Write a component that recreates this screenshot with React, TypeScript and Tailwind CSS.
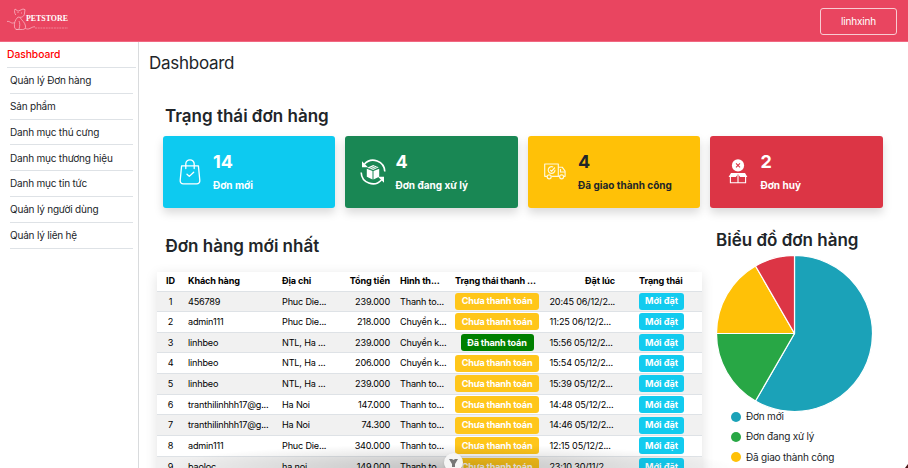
import type { ReactNode } from "react";

const nav = [
  "Quản lý Đơn hàng",
  "Sản phẩm",
  "Danh mục thú cưng",
  "Danh mục thương hiệu",
  "Danh mục tin tức",
  "Quản lý người dùng",
  "Quản lý liên hệ",
];

const orders = [
  ["1", "456789", "Phuc Die...", "239.000", "Thanh to...", false, "20:45 06/12/2..."],
  ["2", "admin111", "Phuc Die...", "218.000", "Chuyển k...", false, "11:25 06/12/2..."],
  ["3", "linhbeo", "NTL, Ha ...", "239.000", "Chuyển k...", true, "15:56 05/12/2..."],
  ["4", "linhbeo", "NTL, Ha ...", "206.000", "Chuyển k...", false, "15:54 05/12/2..."],
  ["5", "linhbeo", "NTL, Ha ...", "239.000", "Thanh to...", false, "15:39 05/12/2..."],
  ["6", "tranthilinhhh17@g...", "Ha Noi", "147.000", "Thanh to...", false, "14:48 05/12/2..."],
  ["7", "tranthilinhhh17@g...", "Ha Noi", "74.300", "Thanh to...", false, "14:46 05/12/2..."],
  ["8", "admin111", "Phuc Die...", "340.000", "Thanh to...", false, "12:15 05/12/2..."],
  ["9", "baoloc", "ha noi", "149.000", "Thanh to...", false, "23:10 30/11/2..."],
] as const;

const columns = "grid grid-cols-[26px_94px_57px_55px_61px_84px_76px_68px] items-center pl-[5px]";

function BagIcon() {
  return (
    <svg width="22" height="26" viewBox="0 0 22 26" fill="none" stroke="white" strokeWidth="1.3" strokeLinecap="round" strokeLinejoin="round">
      <path d="M2.6 6.8h16.8l1.4 14.5c.2 2.2-1 3.6-3.1 3.6H4.3c-2.1 0-3.3-1.4-3.1-3.6z" />
      <path d="M6.8 9.5V5a4.2 4.2 0 0 1 8.4 0v4.5M8 15.2l2.3 2.2 4.4-4.2" />
    </svg>
  );
}

function ProcessIcon() {
  return (
    <svg width="26" height="26" viewBox="0 0 26 26" fill="none" stroke="white" strokeWidth="1.6">
      <path d="M4.5 5A11.7 11.7 0 0 1 24.8 12.5M21.5 21A11.7 11.7 0 0 1 1.2 13.5" />
      <path d="M2 2.3v6h6zM24 23.7v-6h-6z" fill="white" stroke="none" />
      <path d="M6.8 9.7l5.700 2.300v8.400l-5.700-2.700zM13.500 12l5.700-2.300v8l-5.700 2.700z" fill="white" stroke="none" />
      <path d="M7.2 8.7l6-2.8 5.5 2.4-5.7 2.8z" fill="white" stroke="none" />
      <path d="M9.2 9.6l6-2.8M11.3 10.4l6-2.7" stroke="#198754" strokeWidth=".6" />
    </svg>
  );
}

function TruckIcon() {
  return (
    <svg width="22" height="17" viewBox="0 0 22 17" fill="none" stroke="#fff8dc" strokeWidth="1.15" strokeLinejoin="round">
      <path d="M3 13.3H.7V1h13.6v12.3H7.5M14.3 4.2h3.9l2.9 4v5.1h-1.2M14.3 13.3h1.4M16.5 6v3h4.2" />
      <circle cx="5.2" cy="13.8" r="2" />
      <circle cx="17.6" cy="13.8" r="2" />
      <path d="M11 6.8A3.4 3.4 0 1 1 9.2 4M6.2 6.8l1.4 1.5 3.3-3.8" />
    </svg>
  );
}

function CancelIcon() {
  return (
    <svg width="20" height="25" viewBox="0 0 20 25">
      <circle cx="10" cy="6.4" r="6.1" fill="white" />
      <path d="M8 4.4l4 4m0-4l-4 4" stroke="#dc3545" strokeWidth="1.1" />
      <path d="M3 14h14l2.4 4h-7.2L10 15.3 7.8 18H.6z" fill="white" />
      <path d="M2.4 17.5v6.3h15.2v-6.3M10 16v7.8" fill="none" stroke="white" strokeWidth="1.1" />
    </svg>
  );
}

function StatCard({ color, icon, count, label }: { color: string; icon: ReactNode; count: number; label: string }) {
  return (
    <div className={`flex h-[72px] items-center rounded-[3px] shadow-[0_5px_10px_rgba(0,0,0,0.15)] ${color}`}>
      <div className="ml-[13.5px] flex w-7 shrink-0 justify-center">{icon}</div>
      <div className="ml-[9px] font-bold">
        <div className="pt-px text-[18px] leading-[26px]">{count}</div>
        <div className="text-[10px] leading-[21px]">{label}</div>
      </div>
    </div>
  );
}

function Logo() {
  return (
    <svg className="mt-[-1px] shrink-0" width="64" height="26" viewBox="0 0 64 26" fill="none" stroke="#f9b4c1" strokeWidth=".8">
      <path d="M0 14.5c3-1 4 3 7.5 1M8 2l3 2.2L16 2l2 .6-.6 4.6c-.6 3-4 3.6-6.4 2.8M8 2c-.8 2-.6 4 .8 6M11 10c-3 3-4 6-3.5 10 .3 2.5 2 2.600 4 2.500M13 10.500c2 3 5 5 5.500 8.500.3 2.500-1 3.500-3 3.500H9M12 14c1 2 1 5 0 8M18 21c4 3 6-1.500 10-1.200M10.500 5.500h1M14 6h1" />
      <text x="19" y="14.2" fill="#fff" stroke="none" textLength="42" lengthAdjust="spacingAndGlyphs" fontSize="7.6" fontWeight="600" className="font-['Liberation_Serif',serif]">PETSTORE</text>
      <path d="M28 21h33" strokeDasharray="2 .7" strokeWidth="1" opacity=".55" />
    </svg>
  );
}

function PieChart() {
  return (
    <svg width="157" height="157" viewBox="-78.5 -78.5 157 157" stroke="white" strokeWidth="1.2" strokeLinejoin="round">
      <path d="M0 0V-78A78 78 0 1 1-39 67.55z" fill="#1ba2b8" />
      <path d="M0 0L-39 67.55A78 78 0 0 1-78 0z" fill="#28a745" />
      <path d="M0 0H-78A78 78 0 0 1-39-67.55z" fill="#ffc107" />
      <path d="M0 0L-39-67.55A78 78 0 0 1 0-78z" fill="#dc3545" />
    </svg>
  );
}

export default function App() {
  return (
    <div className="relative h-[468px] w-[908px] overflow-hidden bg-white font-['Inter','Noto_Sans',sans-serif] text-[#212529]">
      <header className="flex h-[42px] items-center justify-between border-b border-[#f16882] bg-[#e94560] pr-[11px] pl-[7px]">
        <Logo />
        <button className="mt-px h-[27px] w-[77px] rounded-[3px] border border-[#f8cbd2] text-[10px] tracking-[-0.15px] text-white">linhxinh</button>
      </header>
      <div className="flex">
        <aside className="h-[426px] w-[139px] shrink-0 border-r border-[#d9dbdd] pl-[7px] text-[10px] tracking-[-0.2px]">
          <div className="mr-[2px] flex h-[26px] items-center border-b border-[#dee2e6] pt-px text-[10.3px] font-medium tracking-[-0.05px] text-[#ff0000]">Dashboard</div>
          <nav className="mr-[5px] ml-[3px]">
            {nav.map((item) => (
              <div key={item} className="flex h-[25.8px] items-center border-b border-[#dee2e6] pt-[0.8px]">{item}</div>
            ))}
          </nav>
        </aside>
        <main className="min-w-0 flex-1">
          <h1 className="ml-[10px] pt-[9px] text-[17px] leading-6 tracking-[-0.27px]">Dashboard</h1>
          <section className="mt-[28.5px] pl-[23.5px]">
            <h2 className="ml-[2.5px] text-[17px] leading-6 font-semibold">Trạng thái đơn hàng</h2>
            <div className="mt-2 grid grid-cols-[repeat(4,172.5px)] gap-[10px]">
              <StatCard color="bg-[#0dcaf0] text-white" icon={<BagIcon />} count={14} label="Đơn mới" />
              <StatCard color="bg-[#198754] text-white" icon={<ProcessIcon />} count={4} label="Đơn đang xử lý" />
              <StatCard color="bg-[#ffc107]" icon={<TruckIcon />} count={4} label="Đã giao thành công" />
              <StatCard color="bg-[#dc3545] text-white" icon={<CancelIcon />} count={2} label="Đơn huỷ" />
            </div>
          </section>
          <div className="flex pl-[18px]">
            <section className="w-[545px] shrink-0 pt-[26.5px]">
              <h2 className="ml-[8.5px] text-[17px] leading-6 font-semibold">Đơn hàng mới nhất</h2>
              <div className="mt-[14px] h-[210px] text-[9.1px] tracking-[-0.18px] whitespace-nowrap text-black shadow-[0_3px_12px_rgba(0,0,0,0.12)]">
                <div className={`${columns} h-[19.5px] border-b border-[#dee2e6] font-bold tracking-[-0.12px]`}>
                  <span className="mr-[9px] text-center">ID</span>
                  <span>Khách hàng</span>
                  <span>Địa chỉ</span>
                  <span className="flex justify-end pr-[4px]">Tổng tiền</span>
                  <span className="pl-[6px]">Hình th...</span>
                  <span className="tracking-[-0.15px]">Trạng thái thanh ...</span>
                  <span className="text-right">Đặt lúc</span>
                  <span className="pl-[24px]">Trạng thái</span>
                </div>
                {orders.map(([id, customer, address, total, method, paid, time], i) => (
                  <div key={id} className={`${columns} h-[20.65px] border-b border-[#dee2e6] ${i % 2 === 0 ? "bg-[#f1f1f1]" : "bg-white"}`}>
                    <span className="mr-[9px] text-center">{id}</span>
                    <span>{customer}</span>
                    <span>{address}</span>
                    <span className="pr-[4px] text-right">{total}</span>
                    <span className="pl-[6px]">{method}</span>
                    <span className={`mx-auto flex h-[17px] items-center justify-center rounded-[3px] font-bold text-white ${paid ? "w-[73px] bg-[#008000]" : "w-[84px] bg-[#ffc61a]"}`}>
                      {paid ? "Đã thanh toán" : "Chưa thanh toán"}
                    </span>
                    <span className="pl-[10.5px]">{time}</span>
                    <span className="ml-[24px] flex h-[17px] w-[45px] items-center justify-center rounded-[3px] bg-[#12cbef] font-bold tracking-normal text-white">Mới đặt</span>
                  </div>
                ))}
              </div>
            </section>
            <section className="pt-[20.5px] pl-[14px]">
              <h2 className="text-[17px] leading-6 font-semibold whitespace-nowrap">Biểu đồ đơn hàng</h2>
              <div className="mt-[2.5px]"><PieChart /></div>
              <ul className="-mt-[5px] ml-[15px] text-[10px] tracking-[-0.2px]">
                <li className="flex h-[20.3px] items-center gap-[5px]"><i className="size-[10px] rounded-full bg-[#1ba2b8]" />Đơn mới</li>
                <li className="flex h-[20.3px] items-center gap-[5px]"><i className="size-[10px] rounded-full bg-[#28a745]" />Đơn đang xử lý</li>
                <li className="flex h-[20.3px] items-center gap-[5px]"><i className="size-[10px] rounded-full bg-[#ffc107]" />Đã giao thành công</li>
              </ul>
            </section>
          </div>
        </main>
      </div>
      <div className="absolute bottom-0 left-[157px] h-[24px] w-[580px] bg-[radial-gradient(ellipse_50%_100%_at_50%_100%,rgba(0,0,0,0.2),rgba(0,0,0,0.1)_50%,transparent)]" />
      <div className="absolute top-[453px] left-[444px] flex size-[19px] justify-center rounded-full bg-[#f5f5f5] pt-[6px] shadow">
        <svg width="9" height="9" viewBox="0 0 9 9" fill="#777"><path d="M0 0h3l1.500 1L6 0h3L6 5v3H3V5z" /></svg>
      </div>
      <svg className="absolute right-0 bottom-0" width="3" height="4" viewBox="0 0 3 4"><path d="M3 0v4H0z" fill="#4a1515" /></svg>
    </div>
  );
}
